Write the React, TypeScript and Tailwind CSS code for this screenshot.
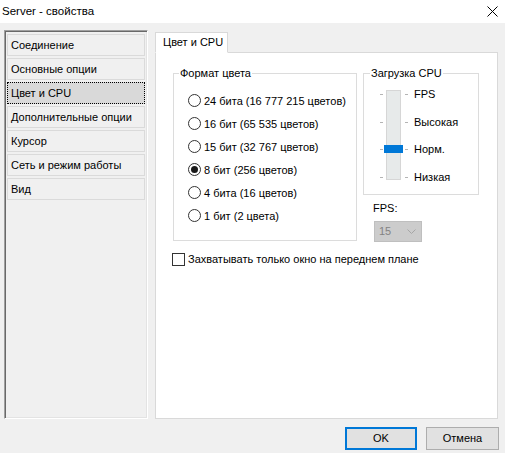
import React from "react";

const PAGES = [
  "Соединение",
  "Основные опции",
  "Цвет и CPU",
  "Дополнительные опции",
  "Курсор",
  "Сеть и режим работы",
  "Вид",
];

const DEPTHS = [
  "24 бита (16 777 215 цветов)",
  "16 бит (65 535 цветов)",
  "15 бит (32 767 цветов)",
  "8 бит (256 цветов)",
  "4 бита (16 цветов)",
  "1 бит (2 цвета)",
];

const CPU_LEVELS = ["FPS", "Высокая", "Норм.", "Низкая"];

function GroupBox({
  title,
  legendClass,
  className,
  children,
}: {
  title: string;
  legendClass: string;
  className: string;
  children: React.ReactNode;
}) {
  return (
    <div className={"relative border border-[#dcdcdc] " + className}>
      <span className={"absolute top-[-8px] bg-white px-px leading-[14px] " + legendClass}>{title}</span>
      {children}
    </div>
  );
}

function Radio({ label, checked }: { label: string; checked?: boolean }) {
  return (
    <div className="flex h-[23px] items-center gap-[3px]">
      <span className="flex h-[13px] w-[13px] items-center justify-center rounded-full border border-[#333333] bg-white">
        {checked && <span className="h-[7px] w-[7px] rounded-full bg-[#1a1a1a]" />}
      </span>
      <span className="leading-[14px]">{label}</span>
    </div>
  );
}

function Ticks() {
  return (
    <div className="flex h-[90px] w-[3px] flex-col justify-between pb-[2px] pt-[4px]">
      {CPU_LEVELS.map((l) => (
        <span key={l} className="h-px w-[3px] bg-[#b4b4b4]" />
      ))}
    </div>
  );
}

export default function App() {
  return (
    <div className="flex h-[453px] w-[505px] flex-col bg-[#f0f0f0] font-['Liberation_Sans',Arial,sans-serif] text-[11px] text-black">
      {/* title bar */}
      <div className="flex h-[23px] items-center justify-between bg-white pl-[2px] pr-[7px]">
        <span className="text-[11.5px]">Server - свойства</span>
        <svg width="11" height="11" viewBox="0 0 11 11" className="mb-[1px]">
          <path d="M0.5 0.5L10.5 10.5M10.5 0.5L0.5 10.5" stroke="#000" strokeWidth="1" />
        </svg>
      </div>

      <div className="flex h-[396px] pl-[4px] pt-[7px]">
        {/* page list */}
        <div className="flex h-[389px] w-[144px] flex-col gap-[2px] border border-b-white border-l-[#a0a0a0] border-r-white border-t-[#a0a0a0] px-[1px] pt-[2px] shadow-[inset_1px_1px_0_#696969,inset_-1px_-1px_0_#e3e3e3]">
          <div className="flex flex-col gap-[2px] px-[1px] pt-px">
            {PAGES.map((p) => (
              <div
                key={p}
                className={
                  p === "Цвет и CPU"
                    ? "flex h-[22px] items-center border border-dotted border-black bg-[#d9d9d9] pl-[3px]"
                    : "flex h-[22px] items-center border border-[#dadada] bg-[#f0f0f0] pl-[3px]"
                }
              >
                {p}
              </div>
            ))}
          </div>
        </div>

        {/* tab area */}
        <div className="ml-[7px] flex w-[343px] flex-col pt-[2px]">
          <div className="z-10 -mb-px flex h-[21px] w-[73px] items-center border border-b-white border-[#d9d9d9] bg-white pl-[7px]">
            Цвет и CPU
          </div>
          <div className="h-[367px] border border-[#d9d9d9] bg-white pl-[17px] pt-[20px]">
            <div className="flex gap-[6px]">
              <GroupBox title="Формат цвета" legendClass="left-[5px]" className="h-[168px] w-[184px] pl-[14px] pt-[15px]">
                {DEPTHS.map((d) => (
                  <Radio key={d} label={d} checked={d.startsWith("8 бит")} />
                ))}
              </GroupBox>

              <div className="flex w-[116px] flex-col">
                <GroupBox title="Загрузка CPU" legendClass="left-[6px]" className="h-[122px] w-[116px] pl-[16px] pt-[16px]">
                  <div className="flex items-start">
                    <Ticks />
                    <div className="relative ml-[3px] h-[90px] w-[15px] border border-[#d6d6d6] bg-[#e7eaea]">
                      <span className="absolute left-[-3px] top-[54px] h-[8px] w-[19px] bg-[#0078d7]" />
                    </div>
                    <div className="ml-[4px]">
                      <Ticks />
                    </div>
                    <div className="-mt-[3px] ml-[6px] flex h-[97px] flex-col justify-between">
                      {CPU_LEVELS.map((l) => (
                        <span key={l} className="h-[14px] leading-[14px]">
                          {l}
                        </span>
                      ))}
                    </div>
                  </div>
                </GroupBox>
                <span className="ml-[10px] mt-[6px] h-[14px] leading-[14px]">FPS:</span>
                <div className="ml-[11px] mt-[6px] flex h-[21px] w-[48px] items-center justify-between border border-[#bfbfbf] bg-[#cccccc] pl-[4px] pr-[5px] text-[#838383]">
                  <span>15</span>
                  <svg width="9" height="5" viewBox="0 0 9 5">
                    <path d="M0.5 0.5L4.5 4.5L8.5 0.5" fill="none" stroke="#a6a6a6" strokeWidth="1" />
                  </svg>
                </div>
              </div>
            </div>

            <div className="-ml-px mt-[10px] flex items-center gap-[3px]">
              <span className="h-[13px] w-[13px] border border-[#333333] bg-white" />
              <span className="leading-[14px]">Захватывать только окно на переднем плане</span>
            </div>
          </div>
        </div>
      </div>

      {/* dialog buttons */}
      <div className="flex justify-end gap-[9px] pr-[6px] pt-[8px]">
        <button type="button" className="flex h-[23px] w-[72px] items-center justify-center border-2 border-[#0078d7] bg-[#e1e1e1]">
          OK
        </button>
        <button type="button" className="flex h-[23px] w-[73px] items-center justify-center border border-[#adadad] bg-[#e1e1e1]">
          Отмена
        </button>
      </div>
    </div>
  );
}
